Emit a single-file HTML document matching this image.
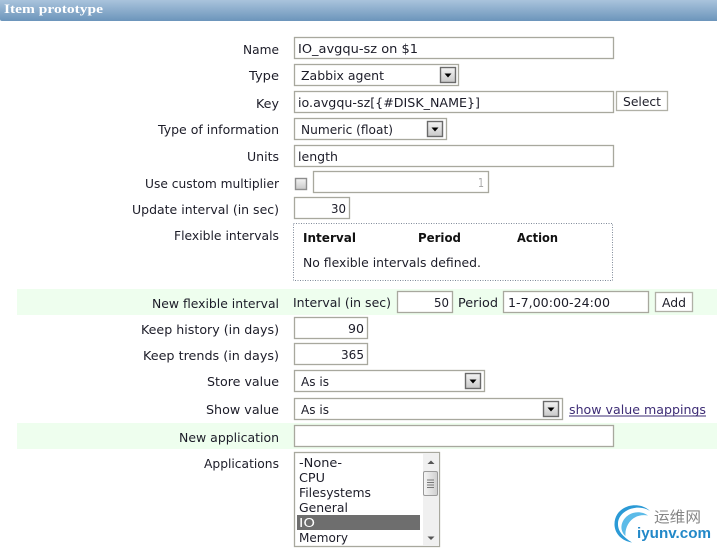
<!DOCTYPE html>
<html><head><meta charset="utf-8"><title>Item prototype</title>
<style>
html,body{margin:0;padding:0;background:#fff;width:717px;height:549px;overflow:hidden}
svg{display:block}
text{font-family:"DejaVu Sans","Liberation Sans",sans-serif;font-size:12px;fill:#1c1c28}
.b{font-weight:bold;fill:#111}
.f{fill:#fff;stroke:#a8a89e;stroke-width:1.3}
.btn{fill:#fff;stroke:#b0b0a6;stroke-width:1.3}
.ar{fill:url(#btn);stroke:#6a6a6a;stroke-width:1.4}
</style></head><body>
<svg width="717" height="549" viewBox="0 0 717 549" xmlns="http://www.w3.org/2000/svg">
<defs>
<linearGradient id="hd" x1="0" y1="0" x2="0" y2="1"><stop offset="0" stop-color="#a9c3dc"/><stop offset="1" stop-color="#6c95bb"/></linearGradient>
<linearGradient id="btn" x1="0" y1="0" x2="0" y2="1"><stop offset="0" stop-color="#f4f4f4"/><stop offset="1" stop-color="#c8c8c8"/></linearGradient>
<linearGradient id="thumb" x1="0" y1="0" x2="1" y2="0"><stop offset="0" stop-color="#f6f6f6"/><stop offset="1" stop-color="#cfcfcf"/></linearGradient>
</defs>

<!-- header -->
<path d="M0 0H717V21H2Q0 21 0 19Z" fill="url(#hd)"/>
<text x="4" y="13" textLength="99" lengthAdjust="spacingAndGlyphs" style="font-family:'Liberation Serif',serif;font-weight:bold;font-size:13px;fill:#fff">Item prototype</text>

<!-- green rows -->
<rect x="17" y="289" width="700" height="26" fill="#eefeee"/>
<rect x="17" y="423" width="700" height="26" fill="#eefeee"/>

<!-- labels -->
<text x="243" y="54" textLength="36" lengthAdjust="spacingAndGlyphs">Name</text>
<text x="249" y="80" textLength="30" lengthAdjust="spacingAndGlyphs">Type</text>
<text x="256" y="108" textLength="23" lengthAdjust="spacingAndGlyphs">Key</text>
<text x="158" y="134" textLength="121" lengthAdjust="spacingAndGlyphs">Type of information</text>
<text x="247" y="161" textLength="32" lengthAdjust="spacingAndGlyphs">Units</text>
<text x="145" y="188" textLength="134" lengthAdjust="spacingAndGlyphs">Use custom multiplier</text>
<text x="132" y="214" textLength="147" lengthAdjust="spacingAndGlyphs">Update interval (in sec)</text>
<text x="174" y="240" textLength="105" lengthAdjust="spacingAndGlyphs">Flexible intervals</text>
<text x="152" y="308" textLength="127" lengthAdjust="spacingAndGlyphs">New flexible interval</text>
<text x="141" y="334" textLength="138" lengthAdjust="spacingAndGlyphs">Keep history (in days)</text>
<text x="143" y="360" textLength="136" lengthAdjust="spacingAndGlyphs">Keep trends (in days)</text>
<text x="207" y="386" textLength="72" lengthAdjust="spacingAndGlyphs">Store value</text>
<text x="206" y="414" textLength="73" lengthAdjust="spacingAndGlyphs">Show value</text>
<text x="179" y="442" textLength="100" lengthAdjust="spacingAndGlyphs">New application</text>
<text x="204" y="468" textLength="75" lengthAdjust="spacingAndGlyphs">Applications</text>

<!-- name -->
<rect class="f" x="294.5" y="37.5" width="319" height="21"/>
<text x="298" y="53" textLength="120" lengthAdjust="spacingAndGlyphs">IO_avgqu-sz on $1</text>

<!-- type select -->
<rect class="f" x="294.5" y="64.5" width="164" height="21"/>
<text x="301" y="80" textLength="83" lengthAdjust="spacingAndGlyphs">Zabbix agent</text>
<rect class="ar" x="440.5" y="67.5" width="15" height="15"/>
<path d="M444.5 73.5h7l-3.5 4z" fill="#000"/>

<!-- key -->
<rect class="f" x="294.5" y="91.5" width="319" height="21"/>
<text x="298" y="107" textLength="182" lengthAdjust="spacingAndGlyphs">io.avgqu-sz[{#DISK_NAME}]</text>
<rect class="btn" x="616.5" y="91.5" width="51" height="19"/>
<text x="623" y="106" textLength="38" lengthAdjust="spacingAndGlyphs">Select</text>

<!-- type of info -->
<rect class="f" x="294.5" y="118.5" width="152" height="21"/>
<text x="301" y="134" textLength="92" lengthAdjust="spacingAndGlyphs">Numeric (float)</text>
<rect class="ar" x="427.5" y="121.5" width="15" height="15"/>
<path d="M431.5 127.5h7l-3.5 4z" fill="#000"/>

<!-- units -->
<rect class="f" x="294.5" y="145.5" width="319" height="21"/>
<text x="298" y="161" textLength="40" lengthAdjust="spacingAndGlyphs">length</text>

<!-- multiplier -->
<rect x="295.5" y="178.5" width="11" height="11" fill="url(#btn)" stroke="#8e8e8e" stroke-width="1.4"/>
<rect class="f" x="313.5" y="171.5" width="175" height="21"/>
<text x="478" y="187" textLength="6" lengthAdjust="spacingAndGlyphs" style="fill:#a8a8a8">1</text>

<!-- update -->
<rect class="f" x="294.5" y="197.5" width="55" height="21"/>
<text x="331" y="213" textLength="15" lengthAdjust="spacingAndGlyphs">30</text>

<!-- flexible intervals -->
<rect x="293.5" y="223.5" width="319" height="57" fill="#fff" stroke="#7f8a99" stroke-width="1" stroke-dasharray="1 1.5"/>
<text class="b" x="303" y="242" textLength="53" lengthAdjust="spacingAndGlyphs">Interval</text>
<text class="b" x="418" y="242" textLength="43" lengthAdjust="spacingAndGlyphs">Period</text>
<text class="b" x="517" y="242" textLength="41" lengthAdjust="spacingAndGlyphs">Action</text>
<text x="303" y="267" textLength="178" lengthAdjust="spacingAndGlyphs">No flexible intervals defined.</text>

<!-- new flexible -->
<text x="293" y="307" textLength="98" lengthAdjust="spacingAndGlyphs">Interval (in sec)</text>
<rect class="f" x="397.5" y="291.5" width="55" height="21"/>
<text x="434" y="307" textLength="15" lengthAdjust="spacingAndGlyphs">50</text>
<text x="458" y="307" textLength="40" lengthAdjust="spacingAndGlyphs">Period</text>
<rect class="f" x="503.5" y="291.5" width="145" height="21"/>
<text x="508" y="307" textLength="102" lengthAdjust="spacingAndGlyphs">1-7,00:00-24:00</text>
<rect class="btn" x="655.5" y="292.5" width="37" height="19"/>
<text x="662" y="307" textLength="24" lengthAdjust="spacingAndGlyphs">Add</text>

<!-- history/trends -->
<rect class="f" x="294.5" y="317.5" width="73" height="21"/>
<text x="348" y="333" textLength="16" lengthAdjust="spacingAndGlyphs">90</text>
<rect class="f" x="294.5" y="343.5" width="73" height="21"/>
<text x="341" y="359" textLength="23" lengthAdjust="spacingAndGlyphs">365</text>

<!-- store -->
<rect class="f" x="294.5" y="370.5" width="190" height="21"/>
<text x="301" y="386" textLength="28" lengthAdjust="spacingAndGlyphs">As is</text>
<rect class="ar" x="465.5" y="373.5" width="15" height="15"/>
<path d="M469.5 379.5h7l-3.5 4z" fill="#000"/>

<!-- show -->
<rect class="f" x="294.5" y="398.5" width="268" height="21"/>
<text x="301" y="414" textLength="28" lengthAdjust="spacingAndGlyphs">As is</text>
<rect class="ar" x="543.5" y="401.5" width="15" height="15"/>
<path d="M547.5 407.5h7l-3.5 4z" fill="#000"/>
<text x="569" y="414" textLength="137" lengthAdjust="spacingAndGlyphs" style="fill:#3d2c75">show value mappings</text>
<rect x="569" y="415.5" width="137" height="1" fill="#3d2c75"/>

<!-- new application -->
<rect class="f" x="294.5" y="425.5" width="319" height="21"/>

<!-- list -->
<rect class="f" x="294.5" y="452.5" width="145" height="94"/>
<rect x="297" y="515" width="123" height="15" fill="#6e6e6e"/>
<text x="299" y="467" textLength="43" lengthAdjust="spacingAndGlyphs">-None-</text>
<text x="299" y="482" textLength="26" lengthAdjust="spacingAndGlyphs">CPU</text>
<text x="299" y="497" textLength="72" lengthAdjust="spacingAndGlyphs">Filesystems</text>
<text x="299" y="512" textLength="49" lengthAdjust="spacingAndGlyphs">General</text>
<text x="299" y="527" textLength="16" lengthAdjust="spacingAndGlyphs" style="fill:#fff">IO</text>
<text x="299" y="542" textLength="49" lengthAdjust="spacingAndGlyphs">Memory</text>
<rect x="423" y="453" width="16" height="93" fill="#f0f0f0"/>
<path d="M427.5 464l3.5-3.5 3.5 3.5z" fill="#555"/>
<path d="M427.5 536.5h7l-3.5 3.5z" fill="#555"/>
<rect x="423.5" y="471.5" width="14" height="24" rx="1.5" fill="url(#thumb)" stroke="#9a9a9a"/>
<path d="M427 480h7M427 482.500h7M427 485h7M427 487.500h7" stroke="#777" stroke-width="1"/>

<!-- logo -->
<path d="M650 511C639 500 614 505 614.500 525C615 534 622 541 632 542.500C624 537 617.500 532 618 523C619 510 638 503 650 511Z" fill="#2b9ad6"/>
<path d="M648 515.500C638 508 623 514 621.500 526C621 530 623 534 625.500 536C624.500 526 632 513 648 515.500Z" fill="#5cbbe8"/>
<text x="654" y="522" textLength="47" lengthAdjust="spacingAndGlyphs" style='font-family:"Noto Sans CJK SC",sans-serif;font-size:15px;fill:#868686'>运维网</text>
<text x="637" y="538" textLength="74" lengthAdjust="spacingAndGlyphs" style='font-family:"Liberation Sans",sans-serif;font-weight:bold;font-size:15px;fill:#2288c8'>iyunv.com</text>
</svg>
</body></html>
